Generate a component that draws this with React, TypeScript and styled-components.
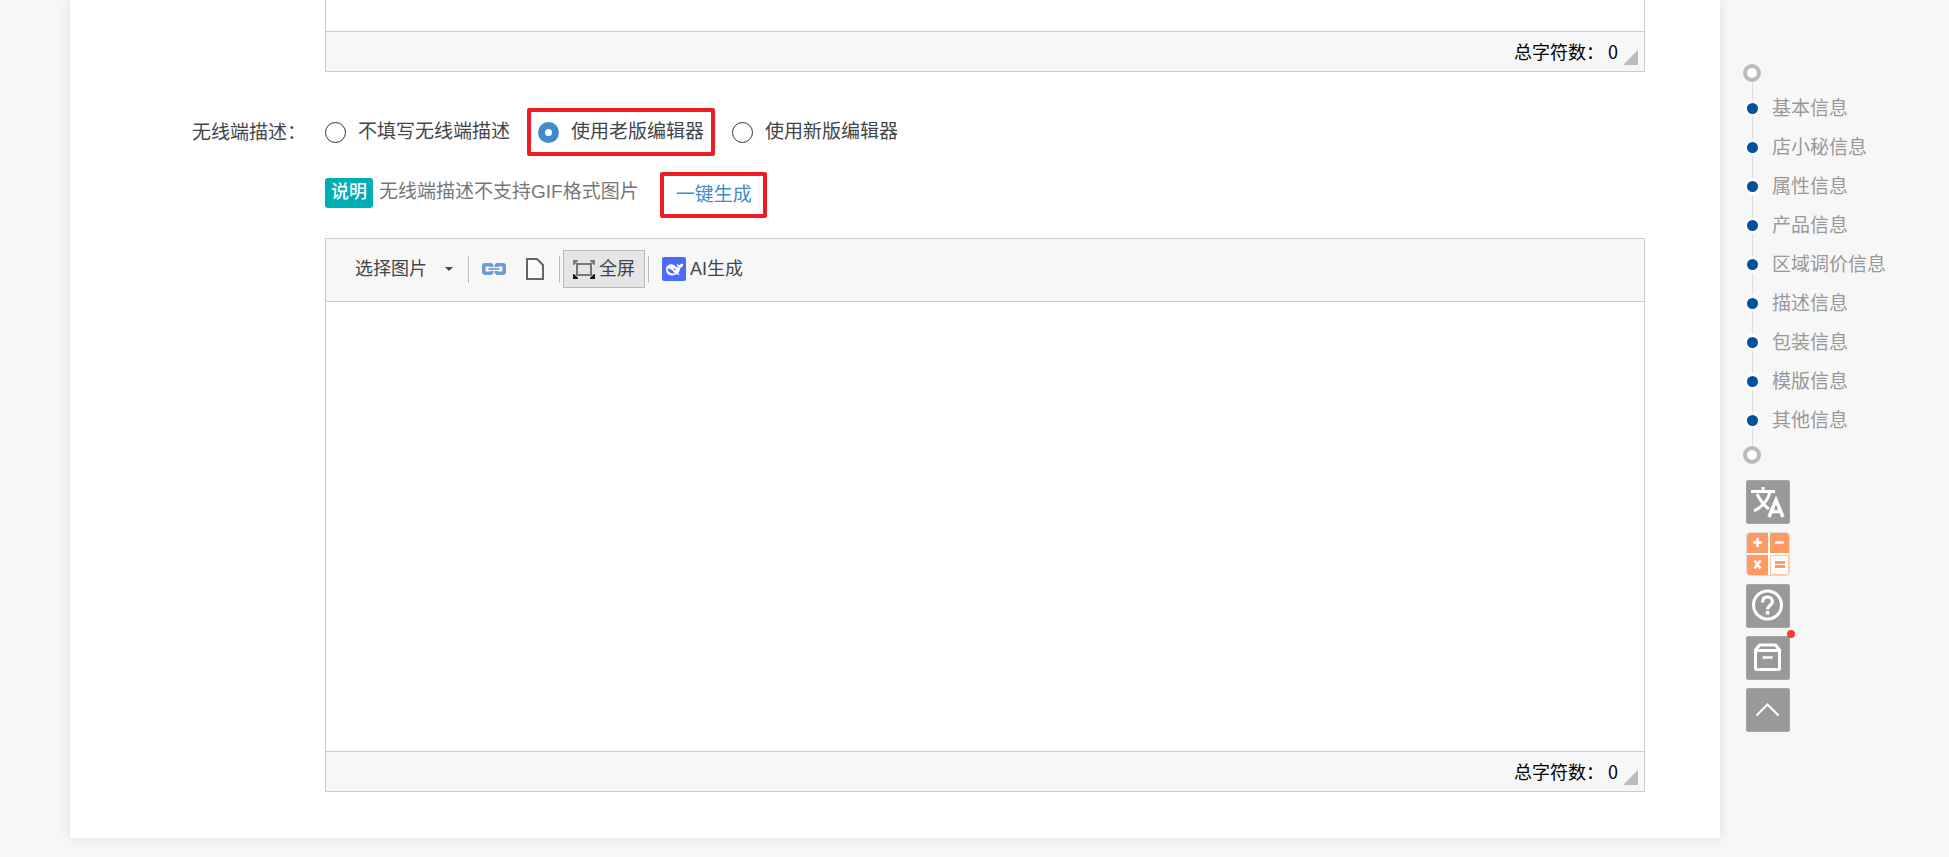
import React from 'react';
import styled, { createGlobalStyle } from 'styled-components';

const Global = createGlobalStyle`
  *, *::before, *::after { box-sizing: border-box; }
  body {
    margin: 0;
    background: #f7f7f7;
    font-family: "Liberation Sans", "Noto Sans CJK SC", sans-serif;
    font-size: 19px;
    line-height: 28px;
    color: #434649;
  }
  button, input { font: inherit; color: inherit; }
`;

const Page = styled.div`
  display: flex;
  align-items: flex-start;
  padding: 0 0 19px 70px;
`;

const Card = styled.main`
  flex: 1;
  min-width: 0;
  padding: 0 75px 46px 111px;
  background: #fff;
  box-shadow: 0 0 10px rgba(110, 130, 170, 0.2);
`;

const FormGrid = styled.div`
  display: grid;
  grid-template-columns: 144px minmax(0, 1fr);
`;

const FieldColumn = styled.div`
  grid-column: 2;
`;

const RowLabel = styled.span`
  padding: 47px 0 0 11px;
  white-space: nowrap;
`;

const Editor = styled.section<{ $openTop?: boolean }>`
  border: 1px solid #ccc;
  border-top-width: ${(p) => (p.$openTop ? 0 : 1)}px;
  background: #fff;
`;

const EditorBody = styled.div<{ $height: number }>`
  height: ${(p) => p.$height}px;
  outline: none;
`;

const EditorFooter = styled.footer`
  display: flex;
  align-items: center;
  justify-content: flex-end;
  gap: 5px;
  height: 40px;
  padding-right: 6px;
  border-top: 1px solid #ccc;
  background: #f7f7f7;
  color: #000;
  font-family: "Noto Sans CJK SC", sans-serif;
  font-size: 18px;
`;

const CountText = styled.span`
  padding-bottom: 2px;
`;

const Grip = styled.span`
  align-self: flex-end;
  margin-bottom: 6px;
  border-left: 15px solid transparent;
  border-bottom: 15px solid #bbb;
`;

const Options = styled.div`
  display: flex;
  align-items: center;
  height: 48px;
  margin-top: 36px;
`;

const Option = styled.label<{ $marked?: boolean }>`
  display: flex;
  align-items: center;
  gap: 12px;
  height: 48px;
  padding: ${(p) => (p.$marked ? '0 7px' : '0')};
  margin: ${(p) => (p.$marked ? '0 17px' : '0')};
  border: ${(p) => (p.$marked ? '4px solid #ef1c24' : 'none')};
  border-radius: 2px;
  white-space: nowrap;
`;

const Radio = styled.input`
  appearance: none;
  flex: none;
  width: 21px;
  height: 21px;
  margin: 0;
  border: 1px solid #333;
  border-radius: 50%;
  background: #fff;
  &:checked { border: 7px solid #428bca; }
`;

const Notice = styled.div`
  display: flex;
  align-items: center;
  gap: 21px;
  height: 46px;
  margin: 16px 0 20px;
  white-space: nowrap;
`;

const Hint = styled.p`
  display: flex;
  gap: 6px;
  margin: 0;
  padding-bottom: 4px;
  color: #777;
`;

const Badge = styled.span`
  height: 30px;
  padding: 0 6px;
  border-radius: 3px;
  background: #00afb5;
  color: #fff;
  font-size: 18px;
  font-weight: 500;
`;

const GenerateButton = styled.button`
  height: 46px;
  padding: 0 11px 0 12px;
  border: 4px solid #ef1c24;
  border-radius: 2px;
  background: none;
  color: #428bca;
`;

const Toolbar = styled.div`
  display: flex;
  align-items: center;
  height: 63px;
  padding: 0 0 2px 19px;
  border-bottom: 1px solid #ccc;
  background: #f7f7f7;
`;

const ToolButton = styled.button<{ $active?: boolean }>`
  display: flex;
  align-items: center;
  gap: 4px;
  height: 38px;
  padding: 0 9px;
  border: 1px solid ${(p) => (p.$active ? '#bbb' : 'transparent')};
  background: ${(p) => (p.$active ? '#e5e5e5' : 'transparent')};
  font-size: 18px;
  white-space: nowrap;
`;

const Caret = styled.span`
  margin: 0 2px 0 14px;
  border: 4px solid transparent;
  border-top-color: #444;
  border-bottom-width: 0;
`;

const Divider = styled.span`
  width: 1px;
  height: 27px;
  margin: 0 3px;
  background: #bbb;
`;

const Sidebar = styled.aside`
  flex: none;
  width: 229px;
  padding: 64px 0 0 23px;
`;

const Steps = styled.nav`
  background: linear-gradient(#ddd, #ddd) 9px 0 / 1px 100% no-repeat;
  color: #999;
`;

const Ring = styled.div`
  width: 18px;
  height: 18px;
  border: 4px solid #bbb;
  border-radius: 50%;
  background: #fff;
`;

const StepList = styled.ul`
  margin: 0;
  padding: 7px 0 6px;
  list-style: none;
`;

const StepLink = styled.a`
  display: flex;
  align-items: center;
  gap: 11px;
  height: 39px;
  padding-left: 1px;
  color: inherit;
  text-decoration: none;
  &::before {
    content: '';
    width: 17px;
    height: 17px;
    border: 3px solid #fff;
    border-radius: 50%;
    background: #0052a0;
  }
`;

const Tools = styled.div`
  display: flex;
  flex-direction: column;
  gap: 8px;
  padding: 16px 0 0 3px;
`;

const Tool = styled.button<{ $plain?: boolean }>`
  position: relative;
  width: 44px;
  height: 44px;
  padding: 0;
  border: 1px solid ${(p) => (p.$plain ? '#ddd' : '#a5a5a5')};
  border-radius: ${(p) => (p.$plain ? 4 : 2)}px;
  background: ${(p) => (p.$plain ? '#fff' : '#999')};
  svg { display: block; width: 42px; height: 42px; }
`;

const Dot = styled.span`
  position: absolute;
  top: -7px;
  right: -6px;
  width: 8px;
  height: 8px;
  border-radius: 50%;
  background: #f04134;
`;

const LinkIcon = () => (
  <svg width="24" height="12" viewBox="0 0 24 12" fill="none" stroke="#6f9bd5" strokeWidth="3.6">
    <path d="M9.700 4V3a1.200 1.200 0 0 0-1.200-1.200H3A1.200 1.200 0 0 0 1.800 3v6A1.200 1.200 0 0 0 3 10.200h5.500A1.200 1.200 0 0 0 9.700 9V8M14.300 4V3a1.200 1.200 0 0 1 1.200-1.200H21A1.200 1.200 0 0 1 22.200 3v6a1.200 1.200 0 0 1-1.200 1.200h-5.500A1.200 1.200 0 0 1 14.300 9V8" />
    <path d="M6 6h12" stroke="#f7f7f7" strokeWidth="4" />
    <path d="M6.500 6h11" stroke="#7fa8dc" strokeWidth="2" />
  </svg>
);

const PageIcon = () => (
  <svg width="20" height="22" viewBox="0 0 20 22" fill="#fbfbfb" stroke="#666" strokeWidth="2">
    <path d="M1 1h10l6 6v14H1z" />
  </svg>
);

const FullscreenIcon = () => (
  <svg width="22" height="19" viewBox="0 0 22 19">
    <rect x="4" y="4" width="14" height="11" fill="none" stroke="#777" strokeWidth="2" />
    <path d="M0 0h5v1L1 5H0zM22 0h-5v1l4 4h1z" fill="#777" />
    <path d="M0 19h5v-1l-4-4H0zM22 19h-5v-1l4-4h1z" fill="#111" />
  </svg>
);

const WhaleIcon = () => (
  <svg width="24" height="24" viewBox="0 0 24 24">
    <rect width="24" height="24" rx="2" fill="#4d6bfe" />
    <path d="M4 12.500C4 9.500 6 7.300 9 7.200c2-.1 3.300 1 4.600 2 1 .9 1.900 1.600 2.900 1.300-1-.8-1.600-2-1.500-3.700.8.900 1.800 1.400 2.700 1.300.5-.9 1.600-1.200 3.500-1.300-.1 2-.9 3.700-2.900 4.200-.2 2-.9 3.800-2.200 5.100l1.500 1.500c-1.100.4-2.100.2-3-.5-1.300.9-2.900 1.400-4.800 1.300C6.400 18.300 4 16 4 12.500z" fill="#fff" />
    <path d="M5.500 11.500c3.300-.6 5.300 2.300 7.600 5-3.800.4-7-1-7.600-5z" fill="#4d6bfe" />
    <path d="M11.300 11.300c1.300 0 2.300.8 2.400 2.200-1-.1-1.900-.8-2.400-2.200z" fill="#4d6bfe" />
  </svg>
);

const TranslateIcon = () => (
  <svg viewBox="0 0 42 42" fill="none" stroke="#fff" strokeWidth="3">
    <path d="M4 10.500h24M16 6v4M23 11c-2 8-8 15-16 19M10 13c3 6 6 11 12 15" />
    <path d="M22 36l7-17 7 17M24.500 30.500h9" strokeWidth="3.500" />
  </svg>
);

const CalculatorIcon = () => (
  <svg viewBox="0 0 42 42">
    <path d="M3 0h18v20H0V3a3 3 0 0 1 3-3zM23 0h16a3 3 0 0 1 3 3v17H23zM0 22h21v20H3a3 3 0 0 1-3-3z" fill="#ff9a63" />
    <path d="M23.500 22.500h18V39a2.500 2.500 0 0 1-2.500 2.500H23.500z" fill="#fff" stroke="#ffc4a4" />
    <path d="M6 9.500h9M10.500 5v9M28 9.500h9M7.500 27.500l6 8M13.500 27.500l-6 8" stroke="#fff" strokeWidth="2.500" />
    <path d="M28 29.500h10M28 33.500h10" stroke="#ff9a63" strokeWidth="3" />
  </svg>
);

const HelpIcon = () => (
  <svg viewBox="0 0 42 42" fill="none" stroke="#fff" strokeWidth="3">
    <circle cx="20.500" cy="20" r="14" />
    <path d="M15.500 17.500c0-3.500 2-5.500 5-5.500s5 2 5 4.500c0 3.500-5 4-5 8" strokeWidth="3.200" />
    <path d="M20.500 26v3.500" strokeWidth="3.500" />
  </svg>
);

const BoxIcon = () => (
  <svg viewBox="0 0 42 42" fill="none" stroke="#fff" strokeWidth="3" strokeLinejoin="round">
    <path d="M8.500 13l4-5h16l4 5v18.500a1 1 0 0 1-1 1h-22a1 1 0 0 1-1-1zM8.500 13.500h24" />
    <path d="M15.500 20.500h10" strokeWidth="2.500" />
  </svg>
);

const UpIcon = () => (
  <svg viewBox="0 0 42 42" fill="none" stroke="#fff" strokeWidth="2">
    <path d="M9.500 26.500l11-11 11 11" />
  </svg>
);

const options = ['不填写无线端描述', '使用老版编辑器', '使用新版编辑器'];
const steps = ['基本信息', '店小秘信息', '属性信息', '产品信息', '区域调价信息', '描述信息', '包装信息', '模版信息', '其他信息'];

const CharCount = () => (
  <EditorFooter>
    <CountText>总字符数： 0</CountText>
    <Grip />
  </EditorFooter>
);

export default function App() {
  const [choice, setChoice] = React.useState(1);
  return (
    <>
      <Global />
      <Page>
        <Card>
          <FormGrid>
            <FieldColumn>
              <Editor $openTop>
                <EditorBody $height={31} />
                <CharCount />
              </Editor>
            </FieldColumn>
            <RowLabel id="wireless">无线端描述：</RowLabel>
            <FieldColumn>
              <Options role="radiogroup" aria-labelledby="wireless">
                {options.map((text, i) => (
                  <Option key={text} $marked={i === 1}>
                    <Radio type="radio" name="wireless" checked={choice === i} onChange={() => setChoice(i)} />
                    {text}
                  </Option>
                ))}
              </Options>
              <Notice>
                <Hint>
                  <Badge>说明</Badge>
                  无线端描述不支持GIF格式图片
                </Hint>
                <GenerateButton type="button">一键生成</GenerateButton>
              </Notice>
              <Editor>
                <Toolbar role="toolbar">
                  <ToolButton type="button">选择图片<Caret /></ToolButton>
                  <Divider />
                  <ToolButton type="button" aria-label="链接"><LinkIcon /></ToolButton>
                  <ToolButton type="button" aria-label="源码"><PageIcon /></ToolButton>
                  <Divider />
                  <ToolButton type="button" $active><FullscreenIcon />全屏</ToolButton>
                  <Divider />
                  <ToolButton type="button"><WhaleIcon />AI生成</ToolButton>
                </Toolbar>
                <EditorBody $height={449} contentEditable suppressContentEditableWarning role="textbox" aria-labelledby="wireless" />
                <CharCount />
              </Editor>
            </FieldColumn>
          </FormGrid>
        </Card>
        <Sidebar>
          <Steps>
            <Ring />
            <StepList>
              {steps.map((s) => (
                <li key={s}><StepLink href="#">{s}</StepLink></li>
              ))}
            </StepList>
            <Ring />
          </Steps>
          <Tools>
            <Tool type="button" aria-label="翻译"><TranslateIcon /></Tool>
            <Tool type="button" aria-label="计算器" $plain><CalculatorIcon /></Tool>
            <Tool type="button" aria-label="帮助"><HelpIcon /></Tool>
            <Tool type="button" aria-label="归档"><BoxIcon /><Dot /></Tool>
            <Tool type="button" aria-label="返回顶部"><UpIcon /></Tool>
          </Tools>
        </Sidebar>
      </Page>
    </>
  );
}
